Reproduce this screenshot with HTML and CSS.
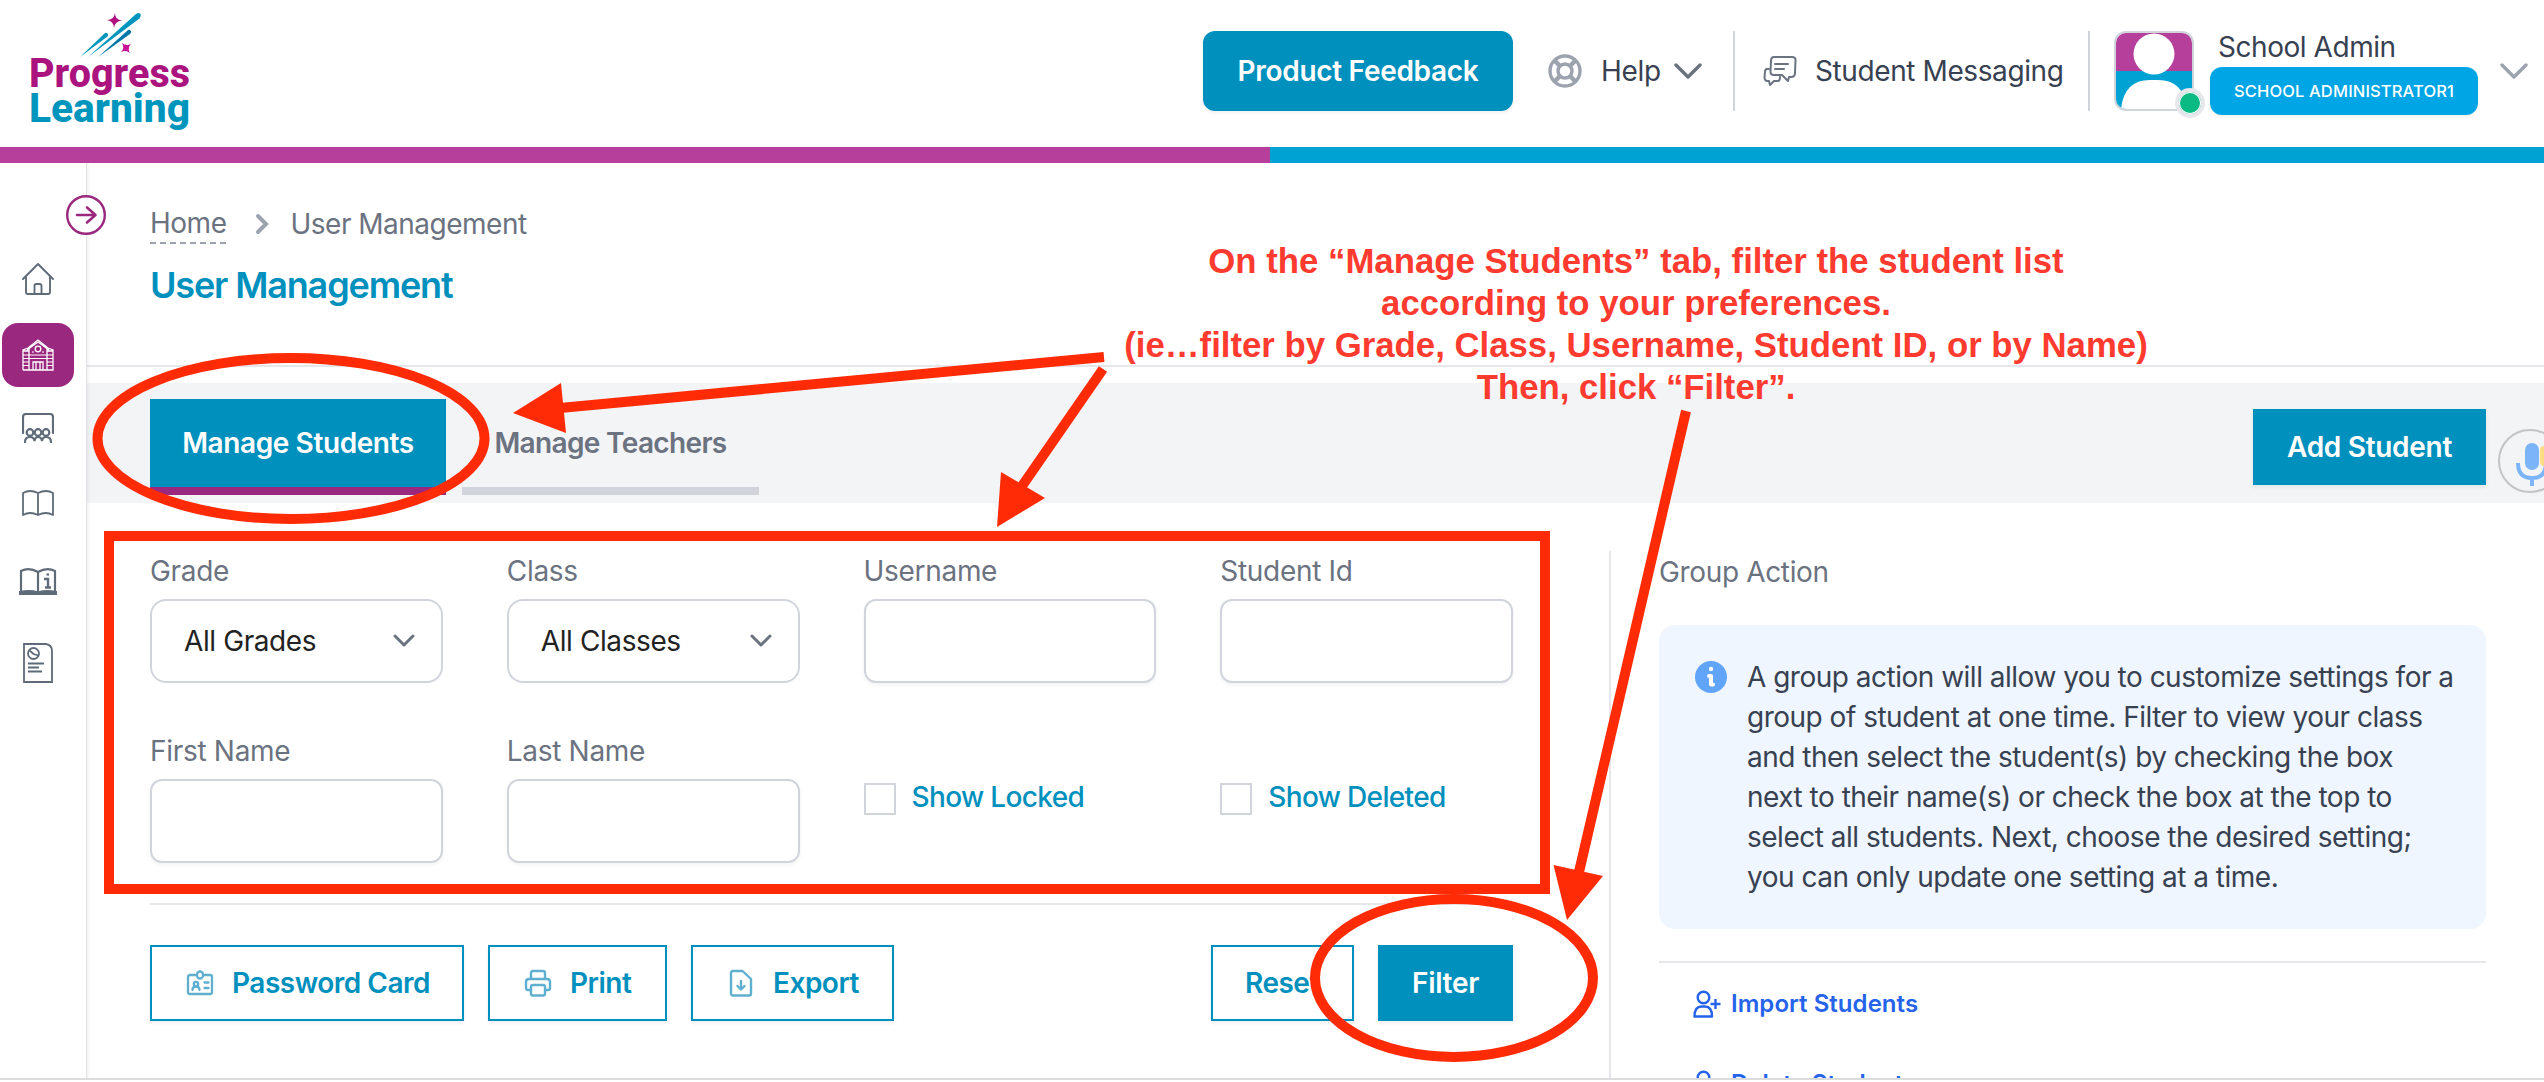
FILE: index.html
```
<!DOCTYPE html>
<html lang="en">
<head>
    <meta charset="UTF-8">
    <meta name="viewport" content="width=device-width, initial-scale=1.0">
    <title>User Management - Progress Learning</title>
    <link rel="stylesheet" href="styles.css">
</head>
<body>
    <header class="header">
        <a class="logo" href="#">
            <svg width="164" height="134" viewBox="0 0 164 134">
                <g fill="#0095bd">
                    <path d="M59 49L107 6q3-2 4.500 0 1 2-1 4.500z"/>
                    <path d="M51 49L75 26q2-2 3.500-.5t0 3z"/>
                    <path d="M69 49L98 23q2-2 3.500-.5t-.5 3.500z" fill="#0077a8"/>
                </g>
                <path d="M86 5Q86 12 93 12.500 86 13 85 20 84.500 13 78 12 85 12 86 5Z" fill="#b0137f"/>
                <path d="M93 35Q97 38.500 102 36 98 40 101 45 97 41.500 92 44 96 40 93 35Z" fill="#c9129a"/>
                <text x="0" y="79" textLength="161" lengthAdjust="spacingAndGlyphs" fill="#ab137f">Progress</text>
                <text x="0" y="114" textLength="161" lengthAdjust="spacingAndGlyphs" fill="#0095bd">Learning</text>
            </svg>
        </a>
        <nav class="header-nav">
            <button class="feedback-btn">Product Feedback</button>
            <a class="help" href="#">
                <svg width="34" height="34" viewBox="0 0 34 34" fill="none" stroke="#9ca3af" stroke-width="3.400">
                    <circle cx="17" cy="17" r="15"/>
                    <circle cx="17" cy="17" r="7"/>
                    <path d="M6.500 6.500l5.500 5.500M22 22l5.500 5.500M27.500 6.500L22 12M12 22l-5.500 5.500" stroke-width="4.500"/>
                </svg>
                <span>Help</span>
                <svg class="chevron" width="28" height="16" viewBox="0 0 28 16" fill="none" stroke="#6b7280" stroke-width="3.400" stroke-linecap="round" stroke-linejoin="round"><path d="M2 2l12 12L26 2"/></svg>
            </a>
            <a class="messaging" href="#">
                <svg width="34" height="30" viewBox="0 0 34 30" fill="none" stroke="#6b7280" stroke-width="2" stroke-linejoin="round" stroke-linecap="round">
                    <path d="M11 1h18q4 0 3.500 4l-.5 12q0 4-4 4h-2l-1 4-6-6H11q-4 0-3.500-4L8 5q0-4 3-4z"/>
                    <path d="M12 8h13M12 13h9M6 13H4q-2 0-2 3l-.5 5q0 4 3 4H6l1 4 4-4h4q2 0 2-4"/>
                </svg>
                <span>Student Messaging</span>
            </a>
            <div class="account">
                <div class="avatar">
                    <svg width="76" height="76" viewBox="0 0 76 76">
                        <rect width="76" height="38" fill="#b53f9b"/>
                        <rect y="38" width="76" height="38" fill="#00a2d3"/>
                        <circle cx="38" cy="21" r="20.500" fill="#fff"/>
                        <path d="M5 76Q8 47 34 47h8q26 0 29 29z" fill="#fff"/>
                    </svg>
                    <span class="status"></span>
                </div>
                <div class="account-info">
                    <span class="account-name">School Admin</span>
                    <span class="account-role">SCHOOL ADMINISTRATOR1</span>
                </div>
                <svg class="chevron" width="28" height="16" viewBox="0 0 28 16" fill="none" stroke="#9ca3af" stroke-width="3.400" stroke-linecap="round" stroke-linejoin="round"><path d="M2 2l12 12L26 2"/></svg>
            </div>
        </nav>
    </header>
    <div class="stripe"></div>

    <div class="app">
        <aside class="sidebar">
            <button class="sidebar-toggle">
                <svg width="40" height="40" viewBox="0 0 40 40" fill="none" stroke="#9b287f" stroke-width="2.600" stroke-linecap="round" stroke-linejoin="round"><circle cx="20" cy="20" r="18.800" fill="#fff" stroke-width="2.400"/><path d="M11 20h18M21 12.500l8.500 7.500-8.500 7.500"/></svg>
            </button>
            <a class="side-item" href="#">
                <svg width="32" height="32" viewBox="0 0 32 32" fill="none" stroke="#5f6b78" stroke-width="1.900" stroke-linecap="round" stroke-linejoin="round"><path d="M1 16L16 1l15 15M4 14v15q0 2 2 2h20q2 0 2-2V14M12.500 31v-8q0-2 2-2h3q2 0 2 2v8"/></svg>
            </a>
            <a class="side-item active" href="#">
                <svg width="32" height="32" viewBox="0 0 32 32" fill="none" stroke="#fff" stroke-width="1.300"><path d="M1 31h30V11l-5-2-10-8L6 9l-5 2v20M7 31V9M25 31V9M5 11L16 3l11 8M1 12h6M25 12h6M11 31v-8h10v8M14 23v8M18 23v8"/><circle cx="16" cy="10" r="2.800"/><path d="M1 16h30M1 19.500h30M1 23h6M25 23h6M1 26.500h6M25 26.500h6M10 13h2M20 13h2" stroke-width="1"/></svg>
            </a>
            <a class="side-item" href="#">
                <svg width="32" height="30" viewBox="0 0 32 30" fill="none" stroke="#5f6b78" stroke-width="2.200" stroke-linecap="round"><path d="M1 20V4q0-3 3-3h24q3 0 3 3v16"/><circle cx="8" cy="19.500" r="3.300"/><circle cx="16" cy="19.500" r="3.300"/><circle cx="24" cy="19.500" r="3.300"/><path d="M3 29q0-5 5-5 4 0 4.500 4Q13 24 16 24q3.500 0 4 4 .5-4 4-4 5 0 5 5"/></svg>
            </a>
            <a class="side-item" href="#">
                <svg width="32" height="26" viewBox="0 0 32 26" fill="none" stroke="#5f6b78" stroke-width="1.800" stroke-linejoin="round"><path d="M16 3Q8-1 1 3v22q7-4 15 0 8-4 15 0V3q-7-4-15 0v22"/></svg>
            </a>
            <a class="side-item" href="#">
                <svg width="38" height="28" viewBox="0 0 38 28" fill="none" stroke="#5f6b78" stroke-width="2.200"><path d="M19 4v20M19 4Q10-1 2 3v21M19 4q9-5 17-1v21"/><path d="M1 26h36v-2q-10-2-18 .5Q11 22 1 24z" fill="#5f6b78"/><path d="M25 11h4v8M26 19.500h6" stroke-width="2.400"/><path d="M27.500 6.500H30"/></svg>
            </a>
            <a class="side-item" href="#">
                <svg width="30" height="40" viewBox="0 0 30 40" fill="none" stroke="#5f6b78" stroke-width="1.800"><path d="M1 1h22q6 1 6 7v31H1z"/><circle cx="10.500" cy="10.500" r="5.500"/><path d="M6 7l4.500 4 5 1.500M5 20.500h16M5 24.500h11M5 28.500h14"/></svg>
            </a>
        </aside>

        <main class="main">
            <div class="page-head">
                <div class="breadcrumb">
                    <a href="#">Home</a>
                    <svg width="14" height="22" viewBox="0 0 14 22" fill="none" stroke="#9ca3af" stroke-width="4" stroke-linecap="round"><path d="M3 3l8 8-8 8"/></svg>
                    <span>User Management</span>
                </div>
                <h1>User Management</h1>
            </div>

            <div class="tab-bar">
                <div class="tabs">
                    <button class="tab tab-active">Manage Students</button>
                    <button class="tab">Manage Teachers</button>
                </div>
                <button class="btn btn-solid add-student">Add Student</button>
            </div>

            <div class="content">
                <section class="filters">
                    <form class="filter-grid">
                        <div class="field">
                            <label>Grade</label>
                            <div class="select">All Grades <svg width="22" height="14" viewBox="0 0 22 14" fill="none" stroke="#6b7280" stroke-width="3" stroke-linecap="round" stroke-linejoin="round"><path d="M2 2l9 9 9-9"/></svg></div>
                        </div>
                        <div class="field">
                            <label>Class</label>
                            <div class="select">All Classes <svg width="22" height="14" viewBox="0 0 22 14" fill="none" stroke="#6b7280" stroke-width="3" stroke-linecap="round" stroke-linejoin="round"><path d="M2 2l9 9 9-9"/></svg></div>
                        </div>
                        <div class="field">
                            <label for="username">Username</label>
                            <input type="text" id="username">
                        </div>
                        <div class="field">
                            <label for="student-id">Student Id</label>
                            <input type="text" id="student-id">
                        </div>
                        <div class="field">
                            <label for="first-name">First Name</label>
                            <input type="text" id="first-name">
                        </div>
                        <div class="field">
                            <label for="last-name">Last Name</label>
                            <input type="text" id="last-name">
                        </div>
                        <label class="check"><input type="checkbox"> Show Locked</label>
                        <label class="check"><input type="checkbox"> Show Deleted</label>
                    </form>

                    <div class="actions">
                        <button class="btn btn-outline card-btn">
                            <svg width="28" height="28" viewBox="0 0 28 28" fill="none" stroke="#5fb0d0" stroke-width="2.300" stroke-linecap="round" stroke-linejoin="round"><path d="M11 6H4q-2 0-2 2v15q0 2 2 2h20q2 0 2-2V8q0-2-2-2h-7"/><rect x="11" y="2.500" width="6" height="7" rx="3"/><circle cx="10" cy="15" r="2.200"/><path d="M6.500 21q0-3.500 3.500-3.500t3.500 3.500M18.500 13.500h4M18.500 19h4"/></svg>
                            Password Card
                        </button>
                        <button class="btn btn-outline print-btn">
                            <svg width="28" height="28" viewBox="0 0 28 28" fill="none" stroke="#5fb0d0" stroke-width="2.400" stroke-linecap="round" stroke-linejoin="round"><path d="M7 10V4q0-2 2-2h10q2 0 2 2v6M7 21H4q-2 0-2-2v-6q0-3 3-3h18q3 0 3 3v6q0 2-2 2h-3"/><rect x="7" y="16" width="14" height="10.500" rx="2"/></svg>
                            Print
                        </button>
                        <button class="btn btn-outline export-btn">
                            <svg width="28" height="28" viewBox="0 0 28 28" fill="none" stroke="#5fb0d0" stroke-width="2.400" stroke-linecap="round" stroke-linejoin="round"><path d="M6 2h9.500L24 10v14.500q0 2-2 2H6q-2 0-2-2V4q0-2 2-2zM14 12v8M10.500 17l3.500 3.500 3.500-3.500"/></svg>
                            Export
                        </button>
                        <button class="btn btn-outline reset">Reset</button>
                        <button class="btn btn-solid filter">Filter</button>
                    </div>
                </section>

                <section class="group-action">
                    <h2>Group Action</h2>
                    <div class="info-box">
                        <svg width="32" height="32" viewBox="0 0 32 32"><circle cx="16" cy="16" r="16" fill="#60a5fa"/><circle cx="16" cy="8" r="2.200" fill="#fff"/><path d="M14 15h2v8.500h2" fill="none" stroke="#fff" stroke-width="4" stroke-linecap="round" stroke-linejoin="round"/></svg>
                        <p>A group action will allow you to customize settings for a<br>group of student at one time. Filter to view your class<br>and then select the student(s) by checking the box<br>next to their name(s) or check the box at the top to<br>select all students. Next, choose the desired setting;<br>you can only update one setting at a time.</p>
                    </div>
                    <div class="group-links">
                        <a href="#">
                            <svg width="28" height="28" viewBox="0 0 28 28" fill="none" stroke="#2563eb" stroke-width="2.400" stroke-linejoin="round"><circle cx="10.500" cy="7.500" r="5.800"/><path d="M1.500 26.500q0-10 7-10h3.500q7 0 7 10zM22.500 9v10M17.500 14h10"/></svg>
                            Import Students
                        </a>
                        <a href="#">
                            <svg width="28" height="28" viewBox="0 0 28 28" fill="none" stroke="#2563eb" stroke-width="2.400" stroke-linejoin="round"><circle cx="10.500" cy="7.500" r="5.800"/><path d="M1.500 26.500q0-10 7-10h3.500q7 0 7 10z"/></svg>
                            Delete Students
                        </a>
                    </div>
                </section>
            </div>
        </main>
    </div>

    <!-- dictation widget, hangs off the right edge -->
    <div class="mic">
        <svg width="60" height="60" viewBox="0 0 60 60"><rect x="40" y="15" width="14" height="20" rx="4" fill="#fddc82"/><rect x="25" y="12" width="14" height="27" rx="7" fill="#7cb4f9"/><path d="M18 32q0 15 14 15t14-15M32 46v9" fill="none" stroke="#7cb4f9" stroke-width="4"/></svg>
    </div>

    <!-- tutorial markup -->
    <div class="callouts">
        <svg width="2544" height="1082" viewBox="0 0 2544 1082">
            <g fill="none" stroke="#ff2b06" stroke-width="10">
                <ellipse cx="291" cy="438.500" rx="193.500" ry="80.500"/>
                <rect x="109" y="536" width="1436" height="353"/>
                <ellipse cx="1454" cy="978" rx="139" ry="79"/>
                <path d="M1104 357L560 408M1103 369L1020 489M1686 411L1579 872"/>
            </g>
            <path d="M561 383L513 413L566 433ZM1001 472L997 527L1045 498ZM1553.500 865L1567 920L1603 876Z" fill="#ff2b06"/>
        </svg>
        <p class="callout-text">On the “Manage Students” tab, filter the student list<br>according to your preferences.<br>(ie…filter by Grade, Class, Username, Student ID, or by Name)<br>Then, click “Filter”.</p>
    </div>
</body>
</html>
```
FILE: styles.css
```
* {
    box-sizing: border-box;
}
body {
    margin: 0;
    height: 1082px;
    overflow: hidden;
    position: relative;
    background: #fff;
    font-family: Inter, "Liberation Sans", sans-serif;
    font-size: 28px;
    line-height: 40px;
    letter-spacing: -0.3px;
    color: #374151;
}
a {
    color: inherit;
    text-decoration: none;
}
button {
    font: inherit;
    letter-spacing: inherit;
    border: none;
    padding: 0;
    cursor: pointer;
}
svg {
    display: block;
    flex: none;
}

/* header */
.header {
    height: 147px;
    padding: 0 16px 0 29px;
    display: flex;
    justify-content: space-between;
}
.logo {
    padding-top: 8px;
}
.logo text {
    font-family: Roboto, sans-serif;
    font-weight: 800;
    font-size: 41px;
    letter-spacing: 0;
}
.header-nav {
    display: flex;
    height: 80px;
    margin-top: 31px;
}
.feedback-btn {
    width: 310px;
    background: #0090bd;
    color: #fff;
    font-weight: 600;
    border-radius: 12px;
    box-shadow: 0 2px 4px rgba(0, 0, 0, 0.06);
}
.help {
    display: flex;
    align-items: center;
    width: 222px;
    padding-left: 35px;
    border-right: 2px solid #d1d5db;
}
.help span {
    width: 73px;
    margin-left: 19px;
}
.messaging {
    display: flex;
    align-items: center;
    gap: 18px;
    width: 355px;
    padding-left: 28px;
    border-right: 2px solid #d1d5db;
    letter-spacing: -0.4px;
}
.account {
    display: flex;
    align-items: center;
    padding-left: 24px;
}
.avatar {
    position: relative;
    width: 80px;
    height: 80px;
    border: 2px solid #d1d5db;
    border-radius: 12px;
}
.avatar svg {
    border-radius: 10px;
}
.status {
    position: absolute;
    right: -13px;
    bottom: -9px;
    width: 30px;
    height: 30px;
    border: 4px solid #e5e7eb;
    border-radius: 50%;
    background: #0bba83;
    box-shadow: inset 0 0 0 1px #fff;
}
.account-info {
    align-self: flex-start;
    width: 268px;
    margin: -4px 22px 0 16px;
}
.account-name {
    display: block;
    padding-left: 8px;
    letter-spacing: -0.45px;
}
.account-role {
    display: block;
    height: 48px;
    line-height: 48px;
    border-radius: 12px;
    background: #00a5e6;
    color: #fff;
    text-align: center;
    font-size: 16.5px;
    font-weight: 500;
    letter-spacing: 0.15px;
    box-shadow: 0 2px 4px rgba(0, 0, 0, 0.06);
}
.stripe {
    height: 16px;
    background: linear-gradient(90deg, #b53f9b 1270px, #00a2d3 1270px);
}

/* layout */
.app {
    display: flex;
    height: 917px;
    overflow: hidden;
    border-bottom: 2px solid #dcdcdc;
}
.sidebar {
    flex: none;
    width: 87px;
    border-right: 1px solid #e2e3e6;
    box-shadow: 1px 0 4px rgba(0, 0, 0, 0.08);
    position: relative;
    padding-top: 84px;
}
.sidebar-toggle {
    position: absolute;
    top: 32px;
    left: 66px;
    background: none;
}
.side-item {
    display: flex;
    align-items: center;
    justify-content: center;
    width: 72px;
    height: 64px;
    margin: 0 0 12px 2px;
    border-radius: 16px;
}
.side-item.active {
    background: #9b287f;
    margin-bottom: 9px;
}
.side-item:nth-child(4) {
    margin-bottom: 11px;
}
.side-item:nth-child(5) {
    margin-bottom: 15px;
}
.side-item:nth-child(6) {
    margin-bottom: 17px;
}
.main {
    flex: 1;
    min-width: 0;
}
.page-head {
    height: 204px;
    padding: 41px 63px 0;
    border-bottom: 2px solid #e5e7eb;
}
.breadcrumb {
    display: flex;
    align-items: center;
    letter-spacing: -0.5px;
    color: #6b7280;
}
.breadcrumb a {
    border-bottom: 2px dashed #9ca3af;
    line-height: 38px;
}
.breadcrumb svg {
    margin: 0 21px 0 29px;
}
h1 {
    margin: 19px 0 0;
    font-size: 36px;
    font-weight: 600;
    line-height: 44px;
    letter-spacing: -1.15px;
    color: #0090bd;
}

/* tabs */
.tab-bar {
    display: flex;
    justify-content: space-between;
    height: 120px;
    margin-top: 16px;
    padding: 16px 58px 8px 63px;
    background: #f3f4f6;
}
.tabs {
    display: flex;
    gap: 16px;
}
.tab {
    width: 297px;
    background: none;
    color: #6b7280;
    font-weight: 600;
    letter-spacing: -0.65px;
    border-bottom: 8px solid #d1d5db;
}
.tab-active {
    width: 296px;
    background: #0090bd;
    color: #fff;
    letter-spacing: -0.4px;
    border-color: #9b287f;
}
.btn {
    height: 76px;
    font-weight: 600;
    letter-spacing: -0.5px;
    box-shadow: 0 2px 4px rgba(0, 0, 0, 0.07);
}
.btn-solid {
    background: #0090bd;
    color: #fff;
    letter-spacing: -0.3px;
}
.btn-outline {
    display: flex;
    align-items: center;
    gap: 18px;
    padding-left: 34px;
    background: #fff;
    color: #0090bd;
    border: 2px solid #0090bd;
    white-space: nowrap;
}
.card-btn {
    width: 314px;
}
.print-btn {
    width: 179px;
}
.export-btn {
    width: 203px;
}
.add-student {
    width: 233px;
    margin-top: 10px;
}

/* filters */
.content {
    display: flex;
}
.filters {
    flex: none;
    width: 1363px;
    margin: 48px 96px 0 63px;
}
.filter-grid {
    display: grid;
    grid-template-columns: repeat(4, 1fr);
    column-gap: 64px;
    row-gap: 48px;
    padding-bottom: 40px;
    border-bottom: 2px solid #e5e7eb;
}
.field {
    height: 132px;
    color: #6b7280;
}
.field label {
    display: block;
    margin-bottom: 8px;
}
.field input,
.select {
    width: 100%;
    height: 84px;
    border: 2px solid #d1d5db;
    border-radius: 12px;
    background: #fff;
    box-shadow: 0 2px 4px rgba(0, 0, 0, 0.05);
}
.select {
    display: flex;
    align-items: center;
    justify-content: space-between;
    padding: 0 26px 0 32px;
    border-radius: 16px;
    color: #222;
    letter-spacing: -0.4px;
    box-shadow: none;
}
.check {
    display: flex;
    height: 32px;
    margin-top: 52px;
    line-height: 28px;
    color: #0090bd;
    font-weight: 500;
    letter-spacing: -0.65px;
}
.check input {
    appearance: none;
    width: 32px;
    height: 32px;
    margin: 0 16px 0 0;
    border: 2px solid #d1d5db;
}
.actions {
    display: flex;
    gap: 24px;
    margin-top: 40px;
}
.reset {
    width: 143px;
    margin-left: auto;
    padding-left: 32px;
}
.filter {
    width: 135px;
}

/* group action */
.group-action {
    flex: 1;
    min-width: 0;
    height: 527px;
    margin: 48px 58px 0 0;
    padding-left: 48px;
    border-left: 2px solid #e5e7eb;
}
.group-action h2 {
    margin: 0;
    font-size: 28px;
    font-weight: 400;
    line-height: 42px;
    letter-spacing: -0.35px;
    color: #6b7280;
}
.info-box {
    display: flex;
    gap: 20px;
    height: 304px;
    margin-top: 32px;
    padding: 32px 32px 0 36px;
    background: #eff6ff;
    border-radius: 16px;
}
.info-box svg {
    margin-top: 4px;
}
.info-box p {
    margin: 0;
    white-space: nowrap;
    letter-spacing: -0.5px;
}
.group-links {
    margin-top: 32px;
    padding: 21px 0 0 34px;
    border-top: 2px solid #e5e7eb;
}
.group-links a {
    display: flex;
    align-items: center;
    gap: 10px;
    height: 40px;
    margin-bottom: 40px;
    font-size: 24px;
    font-weight: 600;
    letter-spacing: 0.05px;
    color: #2563eb;
}

.mic {
    position: absolute;
    left: 2498px;
    top: 429px;
    width: 64px;
    height: 64px;
    border: 2px solid #c4c4c6;
    border-radius: 50%;
    overflow: hidden;
}

.callouts {
    position: absolute;
    top: 0;
    left: 0;
    pointer-events: none;
}
.callout-text {
    position: absolute;
    top: 240px;
    left: 1086px;
    width: 1100px;
    margin: 0;
    text-align: center;
    white-space: nowrap;
    font: bold 34.75px/42px "Liberation Sans", sans-serif;
    letter-spacing: 0;
    color: #ff3b30;
}
```
